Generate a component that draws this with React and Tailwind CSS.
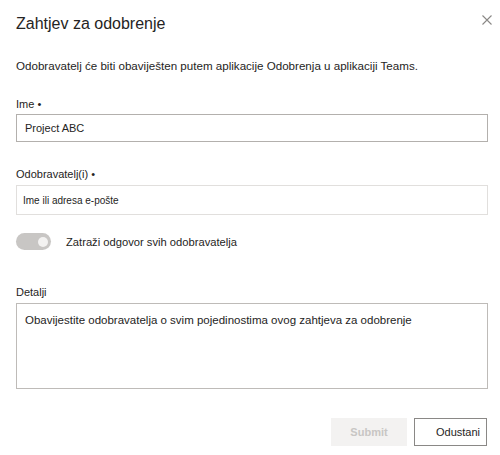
import React from "react";

export default function App() {
  return (
    <div
      className="w-[500px] h-[455px] bg-white pl-4 pr-[12px] pt-[14px] text-[#252423]"
      style={{ fontFamily: '"Liberation Sans", Arial, sans-serif' }}
    >
      {/* Header */}
      <div className="flex items-start justify-between">
        <h1 className="text-[16px] leading-[20px] font-normal">Zahtjev za odobrenje</h1>
        <button className="mt-[1px] mr-[-4px] w-[10px] h-[10px] flex items-center justify-center">
          <svg width="10" height="10" viewBox="0 0 10 10" fill="none">
            <path d="M0.5 0.5l9 9M9.5 0.5l-9 9" stroke="#8a8886" strokeWidth="1.1" />
          </svg>
        </button>
      </div>

      <p className="mt-[24px] text-[11.6px] leading-[16px]">
        Odobravatelj će biti obaviješten putem aplikacije Odobrenja u aplikaciji Teams.
      </p>

      {/* Ime */}
      <div className="mt-[22px] text-[11px] leading-[16px]">Ime •</div>
      <div className="mt-[2px] h-[28px] border border-[#b3b0ad] flex items-center px-2 text-[11px]">
        Project ABC
      </div>

      {/* Odobravatelj */}
      <div className="mt-[24px] text-[11px] leading-[16px]">Odobravatelj(i) •</div>
      <div className="mt-[3px] h-[30px] border border-[#e1dfdd] flex items-center px-[6px] text-[10px]">
        Ime ili adresa e-pošte
      </div>

      {/* Toggle */}
      <div className="mt-[18px] flex items-center gap-[15px]">
        <div className="w-[35px] h-[17px] rounded-full bg-[#c8c6c4] flex items-center justify-end pr-[3px]">
          <div className="w-[10px] h-[10px] rounded-full bg-[#f3f2f1]" />
        </div>
        <span className="text-[11.2px] leading-[16px]">Zatraži odgovor svih odobravatelja</span>
      </div>

      {/* Detalji */}
      <div className="mt-[34px] text-[11px] leading-[16px]">Detalji</div>
      <div className="mt-[3px] h-[86px] border border-[#bebbb8] px-2 pt-[8px] text-[11.5px] leading-[16px]">
        Obavijestite odobravatelja o svim pojedinostima ovog zahtjeva za odobrenje
      </div>

      {/* Footer */}
      <div className="mt-[29px] flex justify-end gap-[7px] pr-[1px]">
        <button className="w-[76px] h-[28px] bg-[#f3f2f1] text-[#c8c6c4] text-[11px] font-bold">
          Submit
        </button>
        <button className="w-[73px] h-[28px] border border-[#8a8886] text-[11px] flex items-center justify-end pr-[6px]">
          Odustani
        </button>
      </div>
    </div>
  );
}
